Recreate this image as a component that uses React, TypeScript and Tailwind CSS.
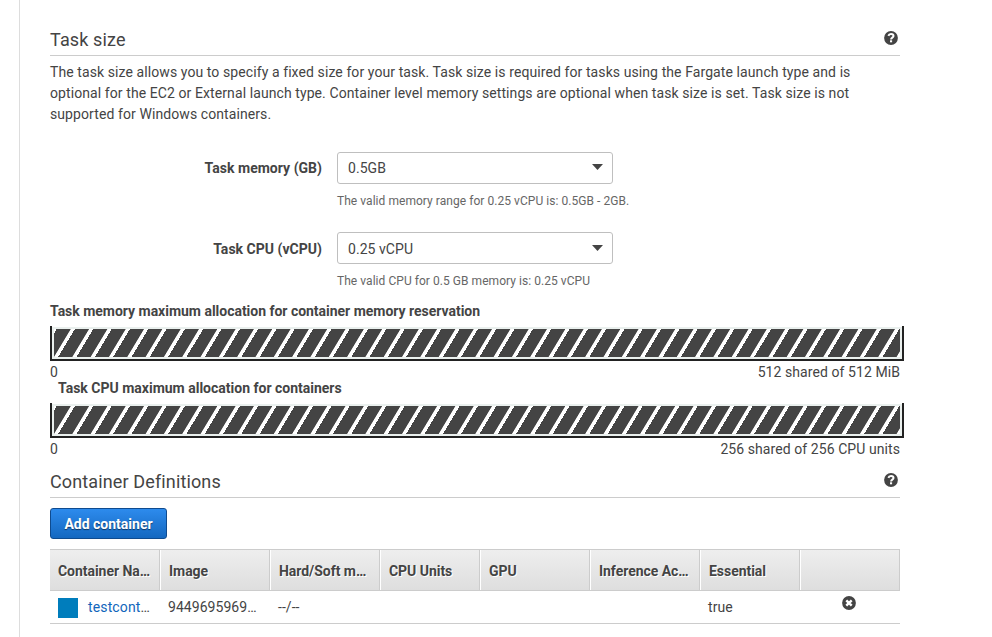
import React from 'react';

function QuestionIcon() {
  return (
    <svg viewBox="0 0 14 14" className="mr-0.5 block h-3.5 w-3.5" aria-label="Help">
      <circle cx="7" cy="7" r="6.9" fill="#444" />
      <path d="M4.4 4.9C4.8 3.6 5.8 3.1 7 3.1 8.5 3.1 9.5 3.9 9.5 5 9.5 6.7 7.1 6.6 7.1 8.4" fill="none" stroke="#fff" strokeWidth="2" />
      <rect x="6" y="9.3" width="2.1" height="2" fill="#fff" />
    </svg>
  );
}

function RemoveIcon() {
  return (
    <svg viewBox="0 0 14 14" className="block h-3.5 w-3.5" aria-label="Remove">
      <circle cx="7" cy="7" r="6.9" fill="#444" />
      <path d="M4.3 4.3L9.7 9.7M9.7 4.3L4.3 9.7" stroke="#fff" strokeWidth="2.4" />
    </svg>
  );
}

function SectionTitle({ title }: { title: string }) {
  return (
    <div className="flex h-[27px] items-start justify-between border-b border-[#ccc]">
      <h2 className="text-[18px] leading-[22px] tracking-[0.13px]">{title}</h2>
      <div className="pt-[2px]">
        <QuestionIcon />
      </div>
    </div>
  );
}

function SelectField({ label, value, hint, low = false }: { label: string; value: string; hint: string; low?: boolean }) {
  return (
    <div className="flex h-20">
      <div className={'w-[272px] text-right font-bold tracking-[0.02px] ' + (low ? 'pt-[7px]' : 'pt-[6px]')}>{label}</div>
      <div className="ml-[15px]">
        <div className={'flex h-8 w-[276px] items-start justify-between rounded-[3px] border border-[#bfbfbf] pr-[9px] pl-[10px] ' + (low ? 'pt-[6px]' : 'pt-[5px]')}>
          <span className="tracking-[0.05px]">{value}</span>
          <svg viewBox="0 0 11 6" className="mt-[6px] h-[6px] w-[11px]">
            <path d="M0 0H11L5.5 6Z" fill="#444" />
          </svg>
        </div>
        <div className="mt-2 text-[12px] leading-[18px] tracking-[0.048px] text-[#666]">{hint}</div>
      </div>
    </div>
  );
}

function AllocationBar({ total }: { total: string }) {
  return (
    <div>
      <div className="h-[35px] w-[854px] border-2 border-t-0 border-[#222] pt-px">
        <div className="h-[32px] border-2 border-[#eaf0ee] bg-[repeating-linear-gradient(121deg,#444_2.3px,#444_14px,#fff_14.8px,#fff_18px)]" />
      </div>
      <div className="flex h-[21px] justify-between pt-px tracking-[0.075px]">
        <span>0</span>
        <span>{total}</span>
      </div>
    </div>
  );
}

const columns = ['Container Na…', 'Image', 'Hard/Soft m…', 'CPU Units', 'GPU', 'Inference Ac…', 'Essential', ''];
const gridClass = 'grid grid-cols-[110px_110px_110px_100px_110px_110px_100px_100px]';

export default function App() {
  return (
    <div className="h-[637px] overflow-hidden bg-white pl-[19px] font-[Roboto,sans-serif] text-[14px] leading-[21px] text-[#444]">
      <main className="h-full border-l border-[#ddd] pt-[29px] pl-[30px]">
        <div className="w-[850px]">
          <SectionTitle title="Task size" />
          <p className="mt-[6px] tracking-[0.088px] whitespace-nowrap">
            The task size allows you to specify a fixed size for your task. Task size is required for tasks using the Fargate launch type and is
            <br />
            optional for the EC2 or External launch type. Container level memory settings are optional when task size is set. Task size is not
            <br />
            supported for Windows containers.
          </p>
          <div className="mt-[27px]">
            <SelectField label="Task memory (GB)" value="0.5GB" hint="The valid memory range for 0.25 vCPU is: 0.5GB - 2GB." />
            <SelectField low label="Task CPU (vCPU)" value="0.25 vCPU" hint="The valid CPU for 0.5 GB memory is: 0.25 vCPU" />
          </div>
          <div className="-mt-[11px] mb-[4px] font-bold tracking-[-0.02px]">Task memory maximum allocation for container memory reservation</div>
          <AllocationBar total="512 shared of 512 MiB" />
          <div className="-mt-[4px] mb-[4px] pl-[8px] font-bold">Task CPU maximum allocation for containers</div>
          <AllocationBar total="256 shared of 256 CPU units" />
          <div className="mt-[12px]">
            <SectionTitle title="Container Definitions" />
          </div>
          <button className="mt-[10px] block h-[31px] w-[117px] rounded-[3px] border border-[#0f4b8f] bg-gradient-to-b from-[#2d8bed] to-[#1468c0] pt-px font-bold text-white [text-shadow:0_1px_1px_#0008]">
            Add container
          </button>
          <div className="mt-[10px]">
            <div className={gridClass + ' h-[42px] border-y border-r border-[#ccc] bg-gradient-to-b from-[#eee] to-[#dedede]'}>
              {columns.map((name, i) => (
                <div
                  key={i}
                  className={
                    'h-10 pt-[11px] font-bold tracking-[-0.04px] whitespace-nowrap [text-shadow:1px_1px_0_#fff] ' +
                    (i === 0 ? 'border-r border-[#ccc] pl-2' : i < 7 ? 'border-r border-l border-r-[#ccc] border-l-white pl-2' : 'border-l border-white')
                  }
                >
                  {name}
                </div>
              ))}
            </div>
            <div className={gridClass + ' h-[33px] border-b border-[#ccc] pt-[6px] tracking-[0.05px]'}>
              <div className="flex pl-2">
                <span className="mt-px mr-[10px] h-5 w-5 bg-[#007dbc]" />
                <span className="tracking-[0.14px]">
                  <a className="text-[#1166bb]">testcont</a>…
                </span>
              </div>
              <div className="pl-2">9449695969…</div>
              <div className="pl-2">--/--</div>
              <div />
              <div />
              <div />
              <div className="pl-2">true</div>
              <div className="-mt-px pl-[42px]">
                <RemoveIcon />
              </div>
            </div>
          </div>
        </div>
      </main>
    </div>
  );
}
